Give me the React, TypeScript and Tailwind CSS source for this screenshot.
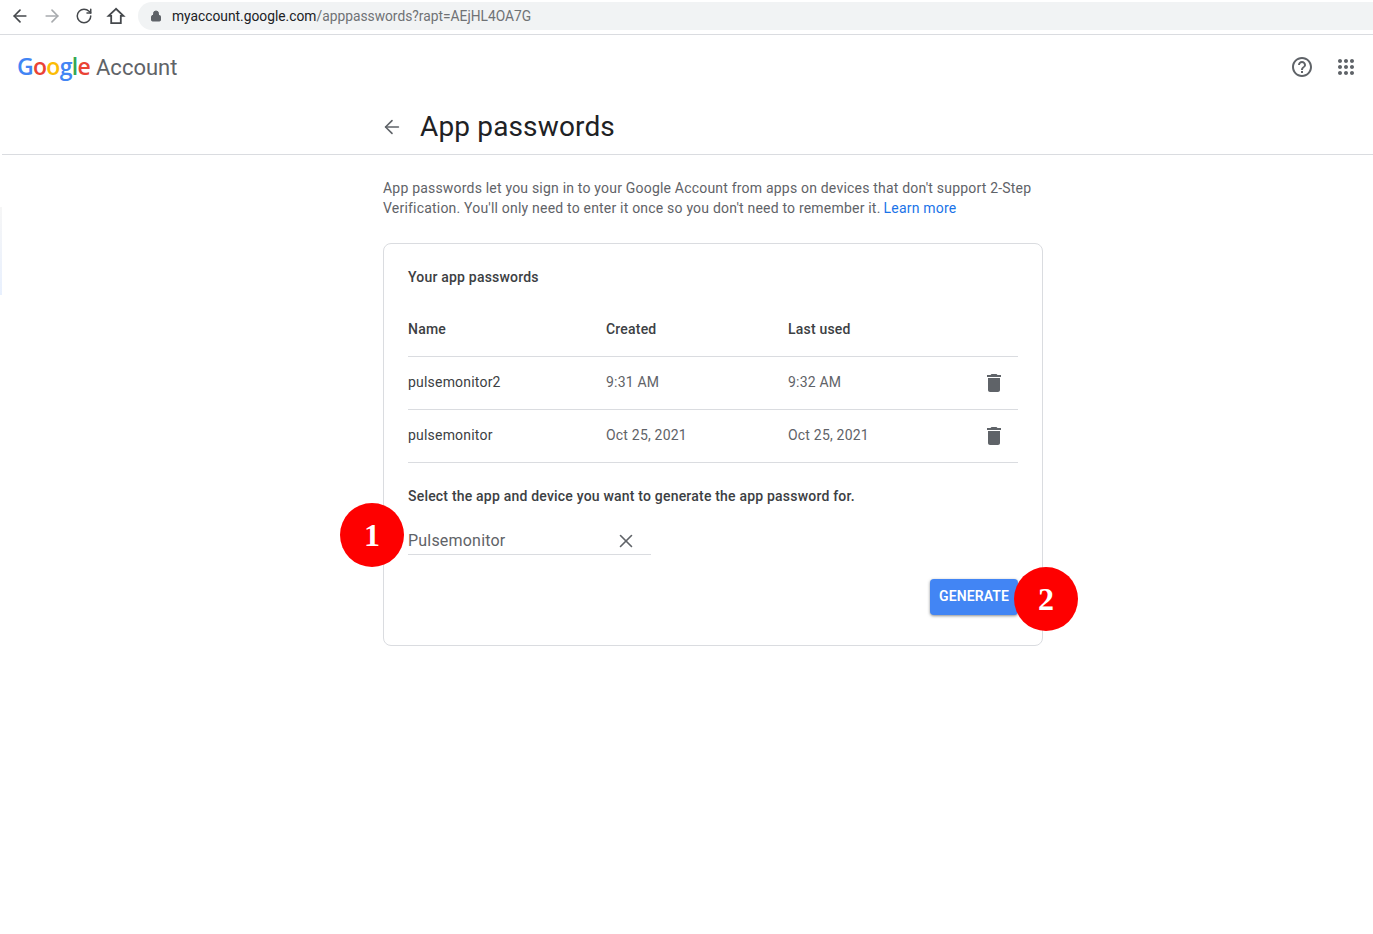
import { ArrowLeft, ArrowRight, Lock, RotateCw, X } from "lucide-react";

const rows = [
    { name: "pulsemonitor2", created: "9:31 AM", lastUsed: "9:32 AM" },
    { name: "pulsemonitor", created: "Oct 25, 2021", lastUsed: "Oct 25, 2021" },
];

function TrashIcon() {
    return (
        <svg width="24" height="24" viewBox="0 0 24 24" fill="#5f6368">
            <path d="M6 19c0 1.100.9 2 2 2h8c1.100 0 2-.9 2-2V7H6v12zM19 4h-3.500l-1-1h-5l-1 1H5v2h14V4z" />
        </svg>
    );
}

function HelpIcon() {
    return (
        <svg width="24" height="24" viewBox="0 0 24 24" fill="#5f6368">
            <path d="M11 18h2v-2h-2v2zm1-16C6.480 2 2 6.480 2 12s4.480 10 10 10 10-4.480 10-10S17.520 2 12 2zm0 18c-4.410 0-8-3.590-8-8s3.590-8 8-8 8 3.590 8 8-3.590 8-8 8zm0-14c-2.210 0-4 1.790-4 4h2c0-1.100.9-2 2-2s2 .9 2 2c0 2-3 1.750-3 5h2c0-2.250 3-2.500 3-5 0-2.210-1.790-4-4-4z" />
        </svg>
    );
}

function AppsIcon() {
    return (
        <svg width="24" height="24" viewBox="0 0 24 24" fill="#5f6368">
            <path d="M6 8c1.100 0 2-.9 2-2s-.9-2-2-2-2 .9-2 2 .9 2 2 2zm6 12c1.100 0 2-.9 2-2s-.9-2-2-2-2 .9-2 2 .9 2 2 2zm-6 0c1.100 0 2-.9 2-2s-.9-2-2-2-2 .9-2 2 .9 2 2 2zm0-6c1.100 0 2-.9 2-2s-.9-2-2-2-2 .9-2 2 .9 2 2 2zm6 0c1.100 0 2-.9 2-2s-.9-2-2-2-2 .9-2 2 .9 2 2 2zm4-8c0 1.100.9 2 2 2s2-.9 2-2-.9-2-2-2-2 .9-2 2zm-4 2c1.100 0 2-.9 2-2s-.9-2-2-2-2 .9-2 2 .9 2 2 2zm6 6c1.100 0 2-.9 2-2s-.9-2-2-2-2 .9-2 2 .9 2 2 2zm0 6c1.100 0 2-.9 2-2s-.9-2-2-2-2 .9-2 2 .9 2 2 2z" />
        </svg>
    );
}

// chrome's toolbar home button, no door
function HomeIcon() {
    return (
        <svg width="20" height="20" viewBox="0 0 20 20" fill="none" stroke="currentColor" strokeWidth="1.8" strokeLinejoin="miter">
            <path d="M10 2.800 2.600 9.800h2.600v7.400h9.600V9.800h2.600z" />
        </svg>
    );
}

function Marker({ label, className }: { label: string; className: string }) {
    return (
        <div
            className={`absolute flex h-16 w-16 items-center justify-center rounded-full bg-[#fe0000] font-['Liberation_Serif',serif] text-[32px] font-bold text-white ${className}`}
        >
            {label}
        </div>
    );
}

export default function App() {
    return (
        <div className="relative min-h-[934px] bg-white font-['Roboto',sans-serif] text-[#3c4043]">
            <div className="absolute left-0 top-[207px] h-[88px] w-[2px] bg-gradient-to-b from-[#f6f6f6] to-[#e8f0fe]" />

            <div className="flex h-[35px] items-center border-b border-[#dadce0] pb-[3px]">
                <div className="flex w-[138px] shrink-0 items-center pl-[10px] text-[#45484c]">
                    <ArrowLeft size={20} strokeWidth={2} />
                    <ArrowRight size={20} strokeWidth={2} className="ml-3 text-[#a8abae]" />
                    <RotateCw size={18} strokeWidth={2} className="ml-[13px]" />
                    <div className="ml-[13px]">
                        <HomeIcon />
                    </div>
                </div>
                <div className="flex h-7 flex-1 items-center rounded-l-full bg-[#f1f3f4] pl-[12px] pt-px text-[13.800px]">
                    <Lock size={12} fill="#5f6368" className="text-[#5f6368]" />
                    <span className="ml-[10px] text-[#202124]">myaccount.google.com</span>
                    <span className="text-[#6f7275]">/apppasswords?rapt=AEjHL4OA7G</span>
                </div>
            </div>

            <header className="flex h-[64px] items-center justify-between pl-[17px] pr-[15px]">
                <div className="flex items-baseline pb-[2px] font-['Open_Sans',sans-serif] text-[23px] font-semibold tracking-[-0.7px]">
                    <span className="text-[#4285f4]">G</span>
                    <span className="text-[#ea4335]">o</span>
                    <span className="text-[#fbbc05]">o</span>
                    <span className="text-[#4285f4]">g</span>
                    <span className="text-[#34a853]">l</span>
                    <span className="text-[#ea4335]">e</span>
                    <span className="ml-[6px] font-['Roboto',sans-serif] text-[22px] font-normal tracking-normal text-[#5f6368]">
                        Account
                    </span>
                </div>
                <div className="flex items-center gap-5 text-[#5f6368]">
                    <HelpIcon />
                    <AppsIcon />
                </div>
            </header>

            <div className="ml-[2px] flex h-[56px] items-center border-b border-[#dadce0] pl-[379px]">
                <ArrowLeft size={22} strokeWidth={1.75} className="text-[#5f6368]" />
                <h1 className="ml-[17px] text-[28px] font-normal tracking-[0.15px] text-[#202124]">App passwords</h1>
            </div>

            <main className="ml-[383px] w-[660px]">
                <div className="mt-[23px] text-[14px] leading-5 tracking-[0.2px] text-[#5f6368]">
                    <p>App passwords let you sign in to your Google Account from apps on devices that don't support 2-Step</p>
                    <p className="flex gap-[3px]">
                        <span>Verification. You'll only need to enter it once so you don't need to remember it.</span>
                        <span className="text-[#1a73e8]">Learn more</span>
                    </p>
                </div>

                <section className="relative mt-[25px] h-[403px] rounded-lg border border-[#dadce0] px-6">
                    <h2 className="pt-[23px] text-[14px] font-medium leading-5 tracking-[0.2px] text-[#3c4043]">Your app passwords</h2>

                    <div className="mt-[32px] flex h-[38px] items-start border-b border-[#dadce0] text-[14px] font-medium leading-5 tracking-[0.2px]">
                        <div className="w-[198px]">Name</div>
                        <div className="w-[182px]">Created</div>
                        <div>Last used</div>
                    </div>

                    {rows.map((row) => (
                        <div
                            key={row.name}
                            className="flex h-[53px] items-center border-b border-[#dadce0] text-[14px] tracking-[0.2px]"
                        >
                            <div className="w-[198px] pb-[2px] text-[#3c4043]">{row.name}</div>
                            <div className="w-[182px] pb-[2px] text-[#5f6368]">{row.created}</div>
                            <div className="w-[194px] pb-[2px] text-[#5f6368]">{row.lastUsed}</div>
                            <TrashIcon />
                        </div>
                    ))}

                    <p className="mt-[23px] text-[14px] font-medium leading-5 tracking-[0.2px] text-[#3c4043]">
                        Select the app and device you want to generate the app password for.
                    </p>

                    <div className="mt-[18px] flex h-[31px] w-[243px] items-center justify-between border-b border-[#dadce0] pr-[14px] pt-1 text-[16px] tracking-[0.2px] text-[#5f6368]">
                        Pulsemonitor
                        <X size={22} strokeWidth={1.75} className="text-[#5f6368]" />
                    </div>

                    <div className="mt-6 flex justify-end">
                        <button className="h-9 w-[88px] rounded bg-[#4285f4] pb-[2px] text-[14px] font-semibold tracking-[0.1px] text-white shadow-[0_1px_3px_rgba(60,64,67,0.6)]">
                            GENERATE
                        </button>
                    </div>

                    <Marker label="1" className="left-[-44px] top-[259px]" />
                    <Marker label="2" className="left-[630px] top-[323px]" />
                </section>
            </main>
        </div>
    );
}
